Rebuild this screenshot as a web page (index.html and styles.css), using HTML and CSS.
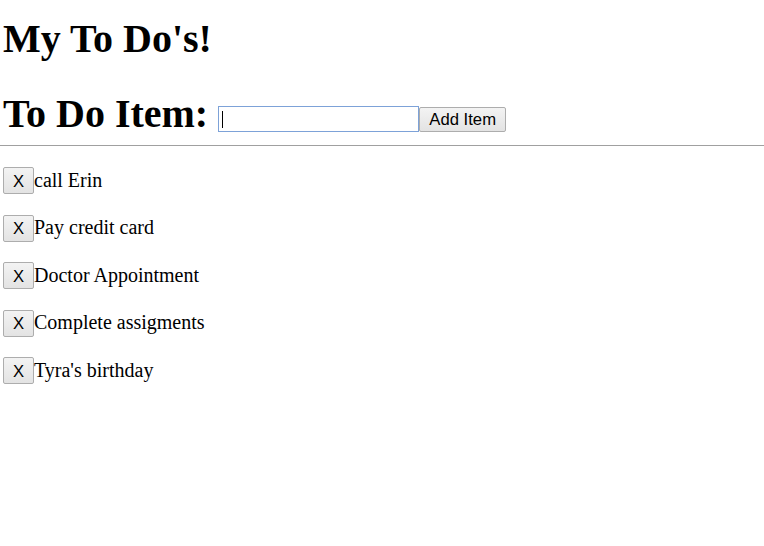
FILE: index.html
```html
<!DOCTYPE html>
<html>
<head>
<meta charset="utf-8">
<title>My To Do's!</title>
<link rel="stylesheet" href="styles.css">
</head>
<body>
<h1 class="title">My To Do's!</h1>
<form class="add-row">
  <h1 class="label">To Do Item:</h1>
  <span class="field"><input class="item-input" type="text"></span>
  <button class="add-btn" type="button">Add Item</button>
</form>
<hr class="divider">
<ul class="todo-list">
  <li class="todo"><button class="del-btn" type="button">X</button><span class="todo-text">call Erin</span></li>
  <li class="todo"><button class="del-btn" type="button">X</button><span class="todo-text">Pay credit card</span></li>
  <li class="todo"><button class="del-btn" type="button">X</button><span class="todo-text">Doctor Appointment</span></li>
  <li class="todo"><button class="del-btn" type="button">X</button><span class="todo-text">Complete assigments</span></li>
  <li class="todo"><button class="del-btn" type="button">X</button><span class="todo-text">Tyra's birthday</span></li>
</ul>
</body>
</html>
```
FILE: styles.css
```css
html, body {
  margin: 0;
  padding: 0;
  background: #ffffff;
}
body {
  font-family: "Liberation Serif", "Times New Roman", serif;
  color: #000;
  font-size: 20px;
}
.title {
  font-size: 40px;
  font-weight: bold;
  line-height: 44px;
  margin: 17px 0 31px 3px;
}
.add-row {
  display: flex;
  align-items: flex-end;
  margin: 0 0 0 3px;
  height: 44px;
}
.label {
  font-size: 40px;
  font-weight: bold;
  line-height: 44px;
  margin: 0 10px 0 0;
}
.field {
  position: relative;
  display: block;
  margin-bottom: 4px;
}
.item-input {
  display: block;
  box-sizing: border-box;
  width: 201px;
  height: 26px;
  margin: 0;
  padding: 0 4px;
  border: 1px solid #7da2d8;
  outline: none;
  background: #fff;
  font-family: "Liberation Sans", Arial, sans-serif;
  font-size: 16.67px;
}
.field::after {
  content: "";
  position: absolute;
  left: 4px;
  top: 5px;
  width: 1px;
  height: 17px;
  background: #000;
}
.add-btn,
.del-btn {
  box-sizing: border-box;
  margin: 0;
  border: 1px solid #adadad;
  border-radius: 2px;
  background: linear-gradient(#f3f3f3, #e3e3e3);
  font-family: "Liberation Sans", Arial, sans-serif;
  font-size: 16.67px;
  color: #000;
  padding: 0;
}
.add-btn {
  width: 87px;
  height: 25px;
  margin-bottom: 4px;
}
.divider {
  border: 0;
  height: 1px;
  background: #a0a0a0;
  margin: 9px 0 0 0;
}
.todo-list {
  list-style: none;
  margin: 21px 0 0 0;
  padding: 0 0 0 3px;
  display: flex;
  flex-direction: column;
  gap: 20px;
}
.todo {
  display: flex;
  align-items: center;
  height: 27.5px;
}
.del-btn {
  width: 31px;
  height: 27px;
  padding-top: 2px;
}
.todo-text {
  margin-left: 0;
  line-height: 23px;
  padding-bottom: 1px;
}
```
